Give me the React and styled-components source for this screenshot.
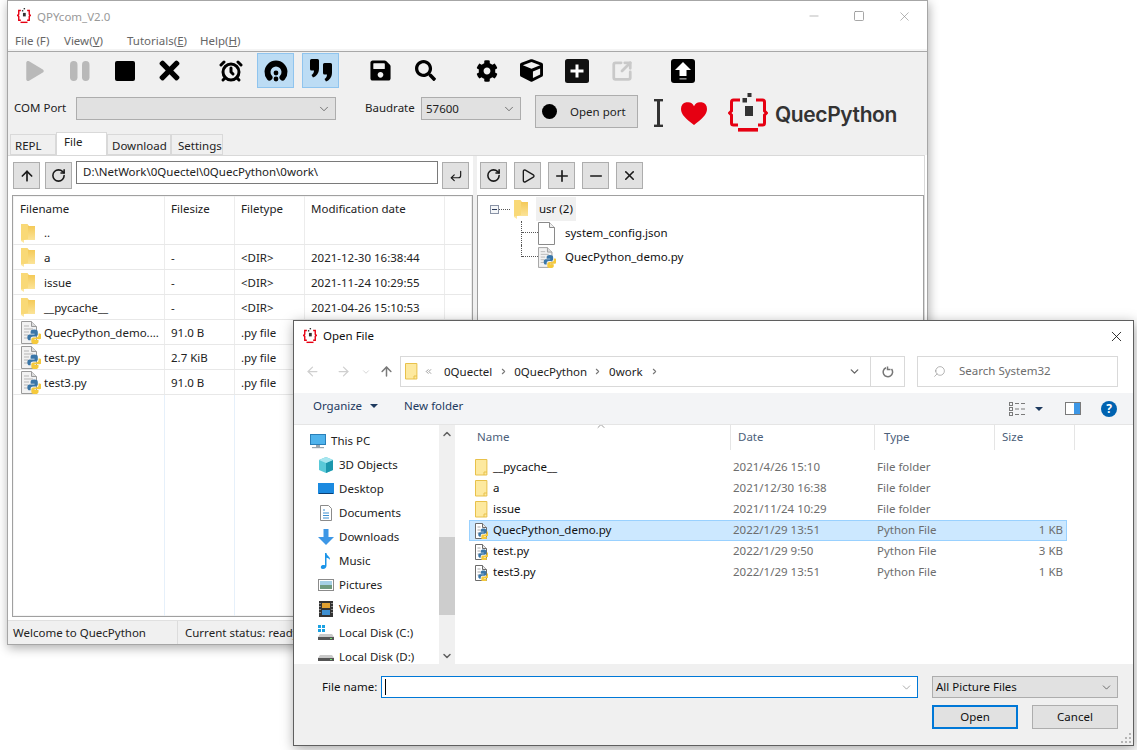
import React from 'react';
import styled, { createGlobalStyle } from 'styled-components';
import { FaPlay, FaTimes, FaSave, FaSearch, FaCog, FaCube } from 'react-icons/fa';
import {
  AlarmClock,
  ArrowLeft,
  ArrowRight,
  ArrowUp,
  ChevronDown,
  ChevronRight,
  ChevronUp,
  ChevronsLeft,
  CornerDownLeft,
  Minus,
  Play,
  Plus,
  RotateCw,
  Search,
  SquareArrowOutUpRight,
  Square,
  X,
} from 'lucide-react';

const GlobalStyle = createGlobalStyle`
  html, body { margin: 0; padding: 0; background: #fff; }
  * { box-sizing: border-box; }
  body { font-family: "Noto Sans", "Open Sans", sans-serif; font-size: 11.5px; color: #111; }
`;

const Desktop = styled.div`
  position: relative;
  width: 1137px;
  height: 750px;
  overflow: hidden;
  background: #fff;
`;

const Spacer = styled.span`
  width: ${(p) => p.$w}px;
  flex: none;
`;

// text sits a pixel above the icon centre line in the native controls
const RowText = styled.span`
  margin-bottom: 2px;
`;

/* ---------- main window ---------- */

const MainWindow = styled.div`
  position: absolute;
  left: 7px;
  top: 0;
  width: 921px;
  height: 645px;
  display: flex;
  flex-direction: column;
  background: #fff;
  border: 1px solid #a6a6a6;
  box-shadow: 1px 3px 10px rgba(0, 0, 0, 0.32);
`;

const TitleBar = styled.div`
  height: 30px;
  flex: none;
  display: flex;
  align-items: center;
  padding-left: 9px;
  gap: 6px;
  color: #999;
`;

const WindowControls = styled.div`
  margin-left: auto;
  display: flex;
  align-items: center;
  gap: 32px;
  padding-right: 15px;
  color: #8a8a8a;
`;

const MenuBar = styled.div`
  height: 21px;
  flex: none;
  display: flex;
  align-items: flex-start;
  border-bottom: 1px solid #a8a8a8;
  box-shadow: inset 0 -2px 0 #f4f4f4;
  color: #666;
  line-height: 19px;
`;

const MenuItem = styled.span`
  margin-left: ${(p) => p.$left}px;
  width: ${(p) => p.$w}px;
  white-space: nowrap;
`;

const TopArea = styled.div`
  height: 80px;
  flex: none;
  background: #f0f0f0;
  display: flex;
  flex-direction: column;
`;

const Toolbar = styled.div`
  display: flex;
  padding: 1px 0 0 8px;
  gap: 8px;
  height: 36px;
  flex: none;
`;

const ToolButton = styled.div`
  width: 37px;
  height: 35px;
  margin-left: ${(p) => p.$gap || 0}px;
  display: flex;
  align-items: center;
  justify-content: center;
  color: ${(p) => (p.$muted ? '#b9b9b9' : '#000')};
  background: ${(p) => (p.$on ? '#bcdcf4' : 'transparent')};
  border: 1px solid ${(p) => (p.$on ? '#8fc4ee' : 'transparent')};
`;

const ComRow = styled.div`
  display: flex;
  align-items: flex-start;
  padding-left: 6px;
  margin-top: 7px;
  height: 33px;
`;

const FieldLabel = styled.div`
  width: ${(p) => p.$w}px;
  margin-left: ${(p) => p.$left || 0}px;
  margin-top: 2px;
  line-height: 22px;
  color: #222;
`;

const ComboBox = styled.div`
  width: ${(p) => p.$w}px;
  height: 23px;
  margin-top: 2px;
  display: flex;
  align-items: center;
  justify-content: space-between;
  padding: 0 4px 0 4px;
  background: #e1e1e1;
  border: 1px solid #adadad;
  color: #222;
`;

const OpenPortButton = styled.div`
  width: 103px;
  height: 33px;
  margin-left: 14px;
  display: flex;
  align-items: center;
  padding-left: 6px;
  gap: 13px;
  background: #e1e1e1;
  border: 1px solid #adadad;
  color: #222;
`;

const Led = styled.span`
  width: 15px;
  height: 15px;
  border-radius: 50%;
  background: #000;
`;

const BrandArea = styled.div`
  display: flex;
  align-items: center;
  height: 40px;
  margin-top: -2px;
  margin-left: 16px;
`;

const BrandName = styled.span`
  margin-left: 7px;
  padding-top: 2px;
  font-family: Inter, "Noto Sans", sans-serif;
  font-weight: 600;
  font-size: 21px;
  letter-spacing: -0.4px;
  color: #333;
`;

const TabStrip = styled.div`
  height: 23px;
  flex: none;
  display: flex;
  align-items: flex-end;
  padding-left: 2px;
  background: #f0f0f0;
`;

const Tab = styled.div`
  width: ${(p) => p.$w}px;
  height: ${(p) => (p.$active ? 23 : 21)}px;
  padding-left: ${(p) => p.$pad}px;
  line-height: ${(p) => (p.$active ? 18 : 21)}px;
  background: ${(p) => (p.$active ? '#fff' : '#f0f0f0')};
  border: 1px solid #d9d9d9;
  border-bottom: ${(p) => (p.$active ? 'none' : '1px solid #d9d9d9')};
  color: #222;
  white-space: nowrap;
`;

const Panel = styled.div`
  flex: 1;
  min-height: 0;
  display: flex;
  background: #fff;
  border-top: 1px solid #d9d9d9;
  border-right: 1px solid #d9d9d9;
  margin-right: 2px;
  padding-left: 4px;
`;

const Pane = styled.div`
  width: ${(p) => p.$w}px;
  flex: none;
  display: flex;
  flex-direction: column;
`;

const Splitter = styled.div`
  width: 4px;
  flex: none;
  background: #f0f0f0;
`;

const PaneBar = styled.div`
  height: 39px;
  flex: none;
  display: flex;
  align-items: flex-start;
  padding: 6px 0 0 ${(p) => p.$pad}px;
  gap: ${(p) => p.$gap}px;
`;

const SquareButton = styled.div`
  width: 27px;
  height: 27px;
  flex: none;
  display: flex;
  align-items: center;
  justify-content: center;
  background: #e1e1e1;
  border: 1px solid #adadad;
  color: #1a1a1a;
`;

const PathInput = styled.div`
  width: 362px;
  height: 23px;
  margin: -1px -1px 0 -1px;
  padding-left: 6px;
  line-height: 20px;
  background: #fff;
  border: 1px solid #7a7a7a;
  color: #222;
`;

const TableBox = styled.div`
  flex: 1;
  min-height: 0;
  display: flex;
  flex-direction: column;
  border: 1px solid #a0a0a0;
  box-shadow: inset 0 0 0 1px #f4f4f4;
`;

const FileRow = styled.div`
  display: grid;
  grid-template-columns: 152px 70px 70px 140px 1fr;
  height: ${(p) => p.$h || 25}px;
  flex: ${(p) => (p.$fill ? 1 : 'none')};
  border-bottom: ${(p) => (p.$plain ? 'none' : '1px solid #e8e8e8')};
`;

const FileCell = styled.div`
  display: flex;
  align-items: center;
  gap: ${(p) => p.$iconGap || 0}px;
  padding-left: ${(p) => p.$pad || 6}px;
  border-right: 1px solid ${(p) => (p.$pale ? '#e6f0fa' : '#ececec')};
  color: #222;
  white-space: nowrap;
  overflow: hidden;
`;

const StatusBar = styled.div`
  height: 24px;
  flex: none;
  margin-top: 3px;
  display: flex;
  align-items: center;
  background: #f0f0f0;
  border-top: 1px solid #e0e0e0;
  color: #222;
`;

const StatusCell = styled.div`
  width: ${(p) => p.$w}px;
  height: 100%;
  line-height: 24px;
  padding-left: ${(p) => p.$pad}px;
  border-right: 1px solid #dcdcdc;
  white-space: nowrap;
`;

const TreeBox = styled.div`
  flex: 1;
  border: 1px solid #a0a0a0;
  padding: 1px 0 0 12px;
`;

const TreeRoot = styled.div`
  display: flex;
  align-items: center;
  height: 24px;
`;

const Expander = styled.span`
  width: 9px;
  height: 9px;
  display: flex;
  align-items: center;
  justify-content: center;
  border: 1px solid #8a93a6;
  background: #f4f6f8;
  &::after {
    content: '';
    width: 5px;
    height: 1px;
    background: #2b3a5a;
  }
`;

const HDots = styled.span`
  width: ${(p) => p.$w}px;
  border-top: 1px dotted #555;
`;

const RootLabel = styled.span`
  margin-left: 8px;
  padding: 0 3px;
  line-height: 24px;
  background: #f0f0f0;
  color: #111;
`;

const TreeChild = styled.div`
  display: flex;
  align-items: center;
  height: 24px;
  margin-left: 31px;
  color: #111;
`;

const TreeIcon = styled.span`
  width: 18px;
  margin-right: 9px;
  flex: none;
  display: flex;
`;

const Connector = styled.span`
  position: relative;
  align-self: flex-start;
  width: 17px;
  height: ${(p) => (p.$last ? 12 : 24)}px;
  border-left: 1px dotted #555;
  &::after {
    content: '';
    position: absolute;
    left: 0;
    top: 11px;
    width: 16px;
    border-top: 1px dotted #555;
  }
`;

/* ---------- open file dialog ---------- */

const Dialog = styled.div`
  position: absolute;
  left: 293px;
  top: 320px;
  width: 841px;
  height: 426px;
  display: flex;
  flex-direction: column;
  background: #fff;
  border: 1px solid #5f5f5f;
  box-shadow: 1px 3px 12px rgba(0, 0, 0, 0.35);
`;

const DialogTitle = styled.div`
  height: 30px;
  flex: none;
  display: flex;
  align-items: center;
  padding: 0 8px 0 9px;
  gap: 6px;
  color: #111;
`;

const CloseGlyph = styled.span`
  margin-left: auto;
  display: flex;
  color: #111;
`;

const NavRow = styled.div`
  height: 42px;
  flex: none;
  display: flex;
  align-items: flex-start;
  padding: 5px 0 0 3px;
`;

const NavSlot = styled.div`
  width: ${(p) => p.$w}px;
  height: 31px;
  display: flex;
  align-items: center;
  justify-content: center;
  color: ${(p) => (p.$dark ? '#7a7a7a' : '#cfcfcf')};
`;

const AddressBar = styled.div`
  width: 505px;
  height: 31px;
  display: flex;
  align-items: center;
  border: 1px solid #d9d9d9;
  padding-left: 4px;
  color: #222;
`;

const Crumb = styled.span`
  margin-left: ${(p) => p.$left}px;
  flex: none;
  display: flex;
  align-items: center;
  color: ${(p) => p.$color || '#222'};
`;

const AddressDrop = styled.span`
  margin-left: auto;
  margin-right: 9px;
  display: flex;
  color: #666;
`;

const AddressEnd = styled.div`
  width: 34px;
  height: 100%;
  display: flex;
  align-items: center;
  justify-content: center;
  border-left: 1px solid #d9d9d9;
  color: #777;
`;

const SearchBox = styled.div`
  width: 201px;
  height: 31px;
  margin-left: 12px;
  display: flex;
  align-items: center;
  padding-left: 15px;
  gap: 13px;
  border: 1px solid #d9d9d9;
  color: #6d6d6d;
`;

const MirrorGlyph = styled.span`
  display: flex;
  transform: scaleX(-1);
`;

const CommandBar = styled.div`
  height: 32px;
  flex: none;
  display: flex;
  align-items: center;
  background: #f3f4f6;
  border-bottom: 1px solid #e5e5e5;
  padding: 0 16px 0 19px;
  color: #1e3a5f;
`;

const Caret = styled.span`
  margin-left: ${(p) => p.$left}px;
  margin-bottom: ${(p) => (p.$lift ? 6 : 0)}px;
  flex: none;
  width: 0;
  height: 0;
  border-left: 4px solid transparent;
  border-right: 4px solid transparent;
  border-top: 4px solid #1e3a5f;
`;

const CommandItem = styled.span`
  margin-left: ${(p) => (p.$auto ? 'auto' : `${p.$left || 0}px`)};
  margin-bottom: ${(p) => (p.$lift ? 6 : 0)}px;
  display: flex;
  align-items: center;
  white-space: nowrap;
`;

const HelpBadge = styled.span`
  width: 16px;
  height: 16px;
  margin-left: 20px;
  border-radius: 50%;
  background: #0063b1;
  color: #fff;
  font-weight: 700;
  font-size: 12px;
  line-height: 16px;
  text-align: center;
`;

const DialogBody = styled.div`
  height: 239px;
  flex: none;
  display: flex;
  overflow: hidden;
`;

const NavList = styled.div`
  width: 145px;
  flex: none;
  padding-top: 4px;
  overflow: hidden;
`;

const NavItem = styled.div`
  height: 24px;
  flex: none;
  display: flex;
  align-items: center;
  gap: 5px;
  padding-left: ${(p) => (p.$top ? 16 : 24)}px;
  color: #222;
  white-space: nowrap;
`;

const ScrollBar = styled.div`
  width: 16px;
  flex: none;
  display: flex;
  flex-direction: column;
  background: #f0f0f0;
  color: #555;
`;

const ScrollEnd = styled.div`
  height: 17px;
  flex: none;
  display: flex;
  align-items: center;
  justify-content: center;
  color: #606060;
`;

const ScrollTrack = styled.div`
  flex: 1;
  padding-top: 95px;
`;

const ScrollThumb = styled.div`
  height: 78px;
  background: #cdcdcd;
`;

const FilePane = styled.div`
  flex: 1;
  min-width: 0;
  margin-left: 2px;
`;

const HeaderRow = styled.div`
  display: grid;
  grid-template-columns: 274px 144px 120px 80px;
  height: 25px;
  margin-bottom: 7px;
`;

const HeaderCell = styled.div`
  position: relative;
  padding-left: ${(p) => p.$pad}px;
  line-height: 24px;
  color: #4c607a;
  border-right: 1px solid #e5e5e5;
`;

const SortMark = styled.span`
  position: absolute;
  left: 138px;
  top: -5px;
  display: flex;
  color: #777;
`;

const ListRow = styled.div`
  display: grid;
  grid-template-columns: 263px 144px 120px 69px;
  align-items: center;
  width: 598px;
  height: 21px;
  margin-left: 12px;
  background: ${(p) => (p.$selected ? '#cce8ff' : 'transparent')};
  border: 1px solid ${(p) => (p.$selected ? '#99d1ff' : 'transparent')};
  color: #6d6d6d;
  white-space: nowrap;
`;

const ListName = styled.div`
  display: flex;
  align-items: center;
  gap: 5px;
  padding-left: 5px;
  color: #111;
`;

const ListCell = styled.div`
  margin-bottom: 2px;
  text-align: ${(p) => (p.$right ? 'right' : 'left')};
  padding-right: ${(p) => (p.$right ? 3 : 0)}px;
`;

const DialogFooter = styled.div`
  position: relative;
  flex: 1;
  background: #f0f0f0;
  padding: 12px 15px 0 28px;
`;

const FooterRow = styled.div`
  display: flex;
  justify-content: ${(p) => (p.$end ? 'flex-end' : 'flex-start')};
  gap: 14px;
  margin-top: ${(p) => p.$top || 0}px;
`;

const FileNameLabel = styled.label`
  width: 59px;
  margin-right: -14px;
  line-height: 22px;
  color: #111;
  white-space: nowrap;
`;

const FileNameInput = styled.div`
  width: 537px;
  height: 22px;
  display: flex;
  align-items: center;
  justify-content: space-between;
  padding: 0 4px 0 3px;
  background: #fff;
  border: 1px solid #0078d7;
  color: #666;
`;

const Caretline = styled.span`
  width: 1px;
  height: 16px;
  background: #000;
`;

const FilterSelect = styled.div`
  width: 186px;
  height: 22px;
  display: flex;
  align-items: center;
  justify-content: space-between;
  padding: 0 4px 0 3px;
  background: #e1e1e1;
  border: 1px solid #adadad;
  color: #111;
`;

const DialogButton = styled.div`
  width: 86px;
  height: 24px;
  line-height: ${(p) => (p.$primary ? 20 : 22)}px;
  text-align: center;
  background: #e1e1e1;
  border: ${(p) => (p.$primary ? '2px solid #0078d7' : '1px solid #adadad')};
  color: #111;
`;

const Grip = styled.svg`
  position: absolute;
  right: 1px;
  bottom: 1px;
`;

/* ---------- drawings ---------- */

const QuecMark = ({ size = 14 }) => (
  <svg width={size} height={size * 1.1} viewBox="0 0 40 44">
    <g fill="none" stroke="#e60012" strokeWidth="4">
      <path d="M11 7H5v11l-3 3 3 3v11h6" />
      <path d="M29 7h6v11l3 3-3 3v11h-6" />
    </g>
    <rect x="10" y="39" width="20" height="4" fill="#e60012" />
    <rect x="17" y="14" width="8" height="10" fill="#333" />
    <rect x="14" y="6" width="4" height="4" fill="#333" />
    <rect x="19" y="0" width="4" height="4" fill="#333" />
  </svg>
);

const BrandLogo = () => (
  <svg width="40" height="40" viewBox="0 0 40 40">
    <g fill="none" stroke="#e60012" strokeWidth="3">
      <path d="M12 7H5.500a2 2 0 0 0-2 2v9l-2 2 2 2v8a2 2 0 0 0 2 2H10" />
      <path d="M28 7h6.500a2 2 0 0 1 2 2v9l2 2-2 2v8a2 2 0 0 1-2 2H30" />
    </g>
    <rect x="10" y="35" width="20" height="3.600" fill="#e60012" />
    <rect x="17" y="13" width="8" height="10" fill="#333" />
    <rect x="14.500" y="5" width="4.500" height="4.500" fill="#333" />
    <rect x="19.500" y="0" width="4" height="4" fill="#333" />
  </svg>
);

const Pause = () => (
  <svg width="20" height="20" viewBox="0 0 20 20" fill="#b9b9b9">
    <rect x="0" y="0" width="7.500" height="20" rx="3.700" />
    <rect x="12" y="0" width="7.500" height="20" rx="3.700" />
  </svg>
);

const Stop = () => (
  <svg width="20" height="20" viewBox="0 0 20 20">
    <rect width="20" height="20" rx="2" fill="#000" />
  </svg>
);

const Headset = () => (
  <svg width="24" height="24" viewBox="0 0 24 24">
    <path d="M5.500 18.500A8.500 8.500 0 1 1 18.500 18.500" fill="none" stroke="#000" strokeWidth="6" strokeLinecap="round" />
    <circle cx="12" cy="14" r="2.400" fill="#000" />
    <circle cx="12" cy="20" r="2.400" fill="#000" />
  </svg>
);

const Quote = () => (
  <svg width="24" height="24" viewBox="0 0 24 24" fill="#000">
    <path d="M1 1.500a1.500 1.500 0 0 1 1.500-1.500h6a1.500 1.500 0 0 1 1.500 1.500v8c0 5-3 8-6 9l-1.500-2.500c1.500-1 2.500-2.500 2.500-4.500h-2.500a1.500 1.500 0 0 1-1.500-1.500z" />
    <path d="M14 5.500a1.500 1.500 0 0 1 1.500-1.500h6a1.500 1.500 0 0 1 1.500 1.500v8c0 5-3 8-6 9l-1.500-2.500c1.500-1 2.500-2.500 2.500-4.500h-2.500a1.500 1.500 0 0 1-1.500-1.500z" />
  </svg>
);

const UploadBox = () => (
  <svg width="24" height="24" viewBox="0 0 24 24">
    <rect width="24" height="24" rx="3" fill="#000" />
    <path d="M12 3l8 8h-4.500v6h-7v-6H4z" fill="#fff" />
    <rect x="8.500" y="19" width="7" height="1.600" fill="#888" />
  </svg>
);

const PlusBox = () => (
  <svg width="24" height="24" viewBox="0 0 24 24">
    <rect width="24" height="24" rx="2.500" fill="#111" />
    <path d="M10.500 5.500h3v5h5v3h-5v5h-3v-5h-5v-3h5z" fill="#fff" />
  </svg>
);

const IBar = () => (
  <svg width="9" height="28" viewBox="0 0 9 28" fill="#333">
    <rect x="0" y="0" width="9" height="2.400" />
    <rect x="0" y="25.600" width="9" height="2.400" />
    <rect x="3" y="0" width="3" height="28" />
  </svg>
);

const Heart = () => (
  <svg width="26" height="23" viewBox="0 0 26 23">
    <path d="M13 23C5 17 0 12.500 0 7a6.800 6.800 0 0 1 13-2.800A6.800 6.800 0 0 1 26 7c0 5.500-5 10-13 16z" fill="#e60012" />
  </svg>
);

const TallFolder = () => (
  <svg width="14" height="20" viewBox="0 0 14 20">
    <defs>
      <linearGradient id="tallFolder" x1="0" y1="0" x2="0" y2="1">
        <stop offset="0" stopColor="#f3c64f" />
        <stop offset="1" stopColor="#fde9a6" />
      </linearGradient>
    </defs>
    <path d="M0 1h6l2 2v0h6v14H3v3l-3-2z" fill="url(#tallFolder)" />
    <path d="M0 1h6l1 1v14l-4 1H0z" fill="#f9d977" />
  </svg>
);

const PYTHON_HALF =
  'M6 .5C4 .5 3 1.200 3 2.500V4h3.300v.6H2C.9 4.600.3 5.500.3 7c0 1.500.7 2.400 1.700 2.400h1V8c0-1.100.9-1.800 2-1.800h2.300C8.200 6.200 9 5.500 9 4.600V2.500C9 1.200 8 .5 6 .5z';

const PythonMark = ({ x, y, s }) => (
  <g transform={`translate(${x} ${y}) scale(${s})`}>
    <path d={PYTHON_HALF} fill="#3a76a8" />
    <path d={PYTHON_HALF} fill="#f5c93c" transform="rotate(180 6 6.200) translate(-.6 -.8)" />
  </g>
);

const PyFile = () => (
  <svg width="20" height="23" viewBox="0 0 20 23">
    <path d="M.5.5h10l5 5v17H.5z" fill="#f2f2f2" stroke="#9a9a9a" />
    <path d="M10.500.5v5h5" fill="#dcdcdc" stroke="#9a9a9a" />
    <g stroke="#b5b5b5">
      <path d="M3 5h5M3 8h9M3 11h5M3 14h4M3 17h4" />
    </g>
    <PythonMark x={6} y={8} s={1.2} />
  </svg>
);

const PyFileSmall = () => (
  <svg width="13" height="16" viewBox="0 0 13 16">
    <path d="M.5.5h7l4 4v11H.5z" fill="#fff" stroke="#6b6b6b" />
    <path d="M7.500.5v4h4" fill="#e8e8e8" stroke="#6b6b6b" />
    <path d="M2.500 4h3M2.500 7h3M2.500 10h2" stroke="#a8a8a8" />
    <PythonMark x={3} y={5} s={0.92} />
  </svg>
);

const BlankFile = () => (
  <svg width="18" height="23" viewBox="0 0 18 23">
    <path d="M.5.5h11l5 5v17H.5z" fill="#fff" stroke="#8a8a8a" />
    <path d="M11.500.5v5h5" fill="#f0f0f0" stroke="#8a8a8a" />
  </svg>
);

const PaleFolder = () => (
  <svg width="13" height="17" viewBox="0 0 13 17">
    <path d="M.5.5h11.400v15.500H.5z" fill="#fde99f" stroke="#e8c14a" />
    <path d="M9 16v-3h3" fill="none" stroke="#e8c14a" />
  </svg>
);

const NavGlyph = ({ kind }) => {
  switch (kind) {
    case 'pc':
      return (
        <svg width="16" height="16" viewBox="0 0 16 16">
          <rect x=".5" y="1.500" width="15" height="10" fill="#4fb3ec" stroke="#2a7fb8" />
          <rect x="6" y="12" width="4" height="2" fill="#9aa5ad" />
          <rect x="2" y="14" width="12" height="1.200" fill="#9aa5ad" />
        </svg>
      );
    case 'cube':
      return (
        <svg width="16" height="16" viewBox="0 0 16 16">
          <path d="M8 0l7 3v10l-7 3-7-3V3z" fill="#59c9d8" />
          <path d="M8 6l7-3v10l-7 3z" fill="#1c97ad" />
          <path d="M8 0l7 3-7 3-7-3z" fill="#a7e6ef" />
        </svg>
      );
    case 'desktop':
      return (
        <svg width="16" height="16" viewBox="0 0 16 16">
          <rect x="0" y="2" width="16" height="11" fill="#1b8ae0" />
          <rect x="1" y="12" width="14" height="1" fill="#0b3f74" />
        </svg>
      );
    case 'docs':
      return (
        <svg width="16" height="16" viewBox="0 0 16 16">
          <path d="M2.500.5h8l3 3v12h-11z" fill="#fff" stroke="#8b8b8b" />
          <path d="M5 5h2M5 8h6M5 10.500h6M5 13h6" stroke="#3d8fd1" />
        </svg>
      );
    case 'down':
      return (
        <svg width="16" height="16" viewBox="0 0 16 16">
          <path d="M5.500 0h5v8H16l-8 8-8-8h5.500z" fill="#3d97e6" />
        </svg>
      );
    case 'music':
      return (
        <svg width="16" height="16" viewBox="0 0 16 16">
          <path d="M7 0h1.500c0 3 4 3.500 3.500 7-.8-1.500-2-2-3.500-2.300V12.500C8.500 14.500 7 16 5 16s-2.500-1.500-2-2.800C3.600 12 5.500 11.500 7 12.200z" fill="#1b94e8" />
        </svg>
      );
    case 'pics':
      return (
        <svg width="16" height="16" viewBox="0 0 16 16">
          <rect x=".5" y="2.500" width="15" height="11" fill="#fff" stroke="#8b8b8b" />
          <rect x="2" y="4" width="12" height="4" fill="#a5d0e6" />
          <rect x="2" y="8" width="12" height="4" fill="#6f9a7f" />
        </svg>
      );
    case 'video':
      return (
        <svg width="16" height="16" viewBox="0 0 16 16">
          <rect x="1" y="0" width="14" height="16" fill="#333" />
          <rect x="4" y="2" width="8" height="5" fill="#e0a030" />
          <rect x="4" y="9" width="8" height="5" fill="#3d8fd1" />
          <path d="M2 2v1M2 5v1M2 8v1M2 11v1M14 2v1M14 5v1M14 8v1M14 11v1" stroke="#ddd" />
        </svg>
      );
    case 'diskC':
      return (
        <svg width="16" height="16" viewBox="0 0 16 16">
          <rect x="0" y="0" width="3" height="3" fill="#1ba1e2" />
          <rect x="4" y="0" width="3" height="3" fill="#1ba1e2" />
          <rect x="0" y="4" width="3" height="3" fill="#1ba1e2" />
          <rect x="4" y="4" width="3" height="3" fill="#1ba1e2" />
          <path d="M2 9h12l2 3v3H0v-3z" fill="#c9c9c9" />
          <rect x="0" y="12" width="16" height="3" fill="#555" />
          <rect x="12" y="13" width="2" height="1" fill="#6fe06f" />
        </svg>
      );
    default:
      return (
        <svg width="16" height="16" viewBox="0 0 16 16">
          <path d="M2 6h12l2 3v3H0V9z" fill="#c9c9c9" />
          <rect x="0" y="9" width="16" height="3" fill="#555" />
          <rect x="12" y="10" width="2" height="1" fill="#6fe06f" />
        </svg>
      );
  }
};

const ViewGlyph = () => (
  <svg width="17" height="14" viewBox="0 0 17 14" fill="none" stroke="#7a7a7a">
    <rect x=".5" y=".5" width="3" height="3" />
    <rect x=".5" y="5.500" width="3" height="3" />
    <rect x=".5" y="10.500" width="3" height="3" />
    <path d="M6 1.500h4M12 1.500h4M6 7h4M12 7h4M6 12.500h4M12 12.500h4" />
  </svg>
);

const PaneGlyph = () => (
  <svg width="16" height="13" viewBox="0 0 16 13">
    <rect x=".5" y=".5" width="15" height="12" fill="#fff" stroke="#7a7a7a" />
    <rect x="9" y="1" width="6" height="11" fill="#3d97e6" />
  </svg>
);

const RefreshGlyph = () => (
  <svg width="12" height="12" viewBox="0 0 12 12" fill="none" stroke="#777" strokeWidth="1.500">
    <path d="M9.500 3A4.700 4.700 0 1 1 4 1.700" />
    <path d="M5.500 .5v3h3" />
  </svg>
);

const GripDots = () => (
  <Grip width="12" height="12" viewBox="0 0 12 12" fill="#b5b5b5">
    <rect x="9" y="1" width="2" height="2" />
    <rect x="5" y="5" width="2" height="2" />
    <rect x="9" y="5" width="2" height="2" />
    <rect x="1" y="9" width="2" height="2" />
    <rect x="5" y="9" width="2" height="2" />
    <rect x="9" y="9" width="2" height="2" />
  </Grip>
);

/* ---------- data ---------- */

const localFiles = [
  { name: '..', folder: true, size: '', type: '', date: '', h: 24 },
  { name: 'a', folder: true, size: '-', type: '<DIR>', date: '2021-12-30 16:38:44' },
  { name: 'issue', folder: true, size: '-', type: '<DIR>', date: '2021-11-24 10:29:55' },
  { name: '__pycache__', folder: true, size: '-', type: '<DIR>', date: '2021-04-26 15:10:53' },
  { name: 'QuecPython_demo....', size: '91.0 B', type: '.py file', date: '' },
  { name: 'test.py', size: '2.7 KiB', type: '.py file', date: '' },
  { name: 'test3.py', size: '91.0 B', type: '.py file', date: '' },
];

const navItems = [
  { kind: 'pc', label: 'This PC', top: true },
  { kind: 'cube', label: '3D Objects' },
  { kind: 'desktop', label: 'Desktop' },
  { kind: 'docs', label: 'Documents' },
  { kind: 'down', label: 'Downloads' },
  { kind: 'music', label: 'Music' },
  { kind: 'pics', label: 'Pictures' },
  { kind: 'video', label: 'Videos' },
  { kind: 'diskC', label: 'Local Disk (C:)' },
  { kind: 'diskD', label: 'Local Disk (D:)' },
];

const dialogFiles = [
  { name: '__pycache__', folder: true, date: '2021/4/26 15:10', type: 'File folder', size: '' },
  { name: 'a', folder: true, date: '2021/12/30 16:38', type: 'File folder', size: '' },
  { name: 'issue', folder: true, date: '2021/11/24 10:29', type: 'File folder', size: '' },
  { name: 'QuecPython_demo.py', date: '2022/1/29 13:51', type: 'Python File', size: '1 KB', selected: true },
  { name: 'test.py', date: '2022/1/29 9:50', type: 'Python File', size: '3 KB' },
  { name: 'test3.py', date: '2022/1/29 13:51', type: 'Python File', size: '1 KB' },
];

const MainApp = () => (
  <MainWindow>
    <TitleBar>
      <QuecMark />
      QPYcom_V2.0
      <WindowControls>
        <Minus size={14} strokeWidth={1} />
        <Square size={12} strokeWidth={1.500} />
        <X size={15} strokeWidth={1} />
      </WindowControls>
    </TitleBar>
    <MenuBar>
      <MenuItem $left={7} $w={49}>File (F)</MenuItem>
      <MenuItem $left={0} $w={63}>View(<u>V</u>)</MenuItem>
      <MenuItem $left={0} $w={73}>Tutorials(<u>E</u>)</MenuItem>
      <MenuItem $left={0} $w={60}>Help(<u>H</u>)</MenuItem>
    </MenuBar>
    <TopArea>
      <Toolbar>
        <ToolButton $muted><FaPlay size={20} /></ToolButton>
        <ToolButton $muted><Pause /></ToolButton>
        <ToolButton><Stop /></ToolButton>
        <ToolButton><FaTimes size={29} /></ToolButton>
        <ToolButton $gap={16}><AlarmClock size={24} strokeWidth={3} /></ToolButton>
        <ToolButton $on><Headset /></ToolButton>
        <ToolButton $on><Quote /></ToolButton>
        <ToolButton $gap={15}><FaSave size={23} /></ToolButton>
        <ToolButton><FaSearch size={21} /></ToolButton>
        <ToolButton $gap={16}><FaCog size={22} /></ToolButton>
        <ToolButton><FaCube size={23} /></ToolButton>
        <ToolButton><PlusBox /></ToolButton>
        <ToolButton $muted><SquareArrowOutUpRight size={22} strokeWidth={3} color="#c9c9c9" /></ToolButton>
        <ToolButton $gap={16}><UploadBox /></ToolButton>
      </Toolbar>
      <ComRow>
        <FieldLabel $w={62}>COM Port</FieldLabel>
        <ComboBox $w={260}>
          <span />
          <ChevronDown size={14} strokeWidth={1} />
        </ComboBox>
        <FieldLabel $w={56} $left={29}>Baudrate</FieldLabel>
        <ComboBox $w={100}>
          57600
          <ChevronDown size={14} strokeWidth={1} />
        </ComboBox>
        <OpenPortButton>
          <Led />
          Open port
        </OpenPortButton>
        <BrandArea>
          <IBar />
          <Spacer $w={18} />
          <Heart />
          <Spacer $w={21} />
          <BrandLogo />
          <BrandName>QuecPython</BrandName>
        </BrandArea>
      </ComRow>
    </TopArea>
    <TabStrip>
      <Tab $w={46} $pad={4}>REPL</Tab>
      <Tab $w={51} $pad={7} $active>File</Tab>
      <Tab $w={64} $pad={4}>Download</Tab>
      <Tab $w={52} $pad={6}>Settings</Tab>
    </TabStrip>
    <Panel>
      <Pane $w={461}>
        <PaneBar $pad={1} $gap={5}>
          <SquareButton><ArrowUp size={16} strokeWidth={2.500} /></SquareButton>
          <SquareButton><RotateCw size={15} strokeWidth={2.500} /></SquareButton>
          <PathInput>D:\NetWork\0Quectel\0QuecPython\0work\</PathInput>
          <SquareButton><CornerDownLeft size={14} strokeWidth={2} /></SquareButton>
        </PaneBar>
        <TableBox>
          <FileRow $plain>
            <FileCell $pad={7}>Filename</FileCell>
            <FileCell>Filesize</FileCell>
            <FileCell>Filetype</FileCell>
            <FileCell>Modification date</FileCell>
            <FileCell />
          </FileRow>
          {localFiles.map((f) => (
            <FileRow key={f.name} $h={f.h}>
              <FileCell $pad={8} $iconGap={f.folder ? 9 : 3}>
                {f.folder ? <TallFolder /> : <PyFile />}
                {f.name}
              </FileCell>
              <FileCell>{f.size}</FileCell>
              <FileCell>{f.type}</FileCell>
              <FileCell>{f.date}</FileCell>
              <FileCell />
            </FileRow>
          ))}
          <FileRow $fill $plain>
            <FileCell $pale />
            <FileCell $pale />
            <FileCell $pale />
            <FileCell $pale />
            <FileCell $pale />
          </FileRow>
        </TableBox>
      </Pane>
      <Splitter />
      <Pane $w={447}>
        <PaneBar $pad={3} $gap={7}>
          <SquareButton><RotateCw size={15} strokeWidth={2.500} /></SquareButton>
          <SquareButton><Play size={16} strokeWidth={2} /></SquareButton>
          <SquareButton><Plus size={18} strokeWidth={2.200} /></SquareButton>
          <SquareButton><Minus size={18} strokeWidth={2.200} /></SquareButton>
          <SquareButton><X size={15} strokeWidth={2.500} /></SquareButton>
        </PaneBar>
        <TreeBox>
          <TreeRoot>
            <Expander />
            <HDots $w={11} />
            <Spacer $w={4} />
            <TallFolder />
            <RootLabel>usr (2)</RootLabel>
          </TreeRoot>
          <TreeChild>
            <Connector />
            <TreeIcon><BlankFile /></TreeIcon>
            <RowText>system_config.json</RowText>
          </TreeChild>
          <TreeChild>
            <Connector $last />
            <TreeIcon><PyFile /></TreeIcon>
            <RowText>QuecPython_demo.py</RowText>
          </TreeChild>
        </TreeBox>
      </Pane>
    </Panel>
    <StatusBar>
      <StatusCell $w={170} $pad={5}>Welcome to QuecPython</StatusCell>
      <StatusCell $w={300} $pad={7}>Current status: ready</StatusCell>
    </StatusBar>
  </MainWindow>
);

const OpenDialog = () => (
  <Dialog>
    <DialogTitle>
      <QuecMark />
      <RowText>Open File</RowText>
      <CloseGlyph><X size={17} strokeWidth={1.200} /></CloseGlyph>
    </DialogTitle>
    <NavRow>
      <NavSlot $w={31}><ArrowLeft size={15} strokeWidth={2} /></NavSlot>
      <NavSlot $w={31}><ArrowRight size={15} strokeWidth={2} /></NavSlot>
      <NavSlot $w={14}><ChevronDown size={10} strokeWidth={2} /></NavSlot>
      <NavSlot $w={27} $dark><ArrowUp size={15} strokeWidth={2.400} /></NavSlot>
      <AddressBar>
        <PaleFolder />
        <Crumb $left={6} $color="#777"><ChevronsLeft size={9} strokeWidth={2} /></Crumb>
        <Crumb $left={11}>0Quectel</Crumb>
        <Crumb $left={7} $color="#777"><ChevronRight size={9} strokeWidth={3} /></Crumb>
        <Crumb $left={6}>0QuecPython</Crumb>
        <Crumb $left={6} $color="#777"><ChevronRight size={9} strokeWidth={3} /></Crumb>
        <Crumb $left={7}>0work</Crumb>
        <Crumb $left={7} $color="#777"><ChevronRight size={9} strokeWidth={3} /></Crumb>
        <AddressDrop><ChevronDown size={13} strokeWidth={2.500} /></AddressDrop>
        <AddressEnd><RefreshGlyph /></AddressEnd>
      </AddressBar>
      <SearchBox>
        <MirrorGlyph><Search size={13} strokeWidth={1} color="#777" /></MirrorGlyph>
        <RowText>Search System32</RowText>
      </SearchBox>
    </NavRow>
    <CommandBar>
      <CommandItem $lift>Organize</CommandItem>
      <Caret $left={8} $lift />
      <CommandItem $left={26} $lift>New folder</CommandItem>
      <CommandItem $auto><ViewGlyph /></CommandItem>
      <Caret $left={9} />
      <CommandItem $left={22}><PaneGlyph /></CommandItem>
      <HelpBadge>?</HelpBadge>
    </CommandBar>
    <DialogBody>
      <NavList>
        {navItems.map((n) => (
          <NavItem key={n.kind} $top={n.top}>
            <NavGlyph kind={n.kind} />
            <RowText>{n.label}</RowText>
          </NavItem>
        ))}
      </NavList>
      <ScrollBar>
        <ScrollEnd><ChevronUp size={12} strokeWidth={3} /></ScrollEnd>
        <ScrollTrack><ScrollThumb /></ScrollTrack>
        <ScrollEnd><ChevronDown size={12} strokeWidth={3} /></ScrollEnd>
      </ScrollBar>
      <FilePane>
        <HeaderRow>
          <HeaderCell $pad={20}>
            Name
            <SortMark><ChevronUp size={12} strokeWidth={1.500} /></SortMark>
          </HeaderCell>
          <HeaderCell $pad={7}>Date</HeaderCell>
          <HeaderCell $pad={9}>Type</HeaderCell>
          <HeaderCell $pad={7}>Size</HeaderCell>
        </HeaderRow>
        {dialogFiles.map((f) => (
          <ListRow key={f.name} $selected={f.selected}>
            <ListName>
              {f.folder ? <PaleFolder /> : <PyFileSmall />}
              <RowText>{f.name}</RowText>
            </ListName>
            <ListCell>{f.date}</ListCell>
            <ListCell>{f.type}</ListCell>
            <ListCell $right>{f.size}</ListCell>
          </ListRow>
        ))}
      </FilePane>
    </DialogBody>
    <DialogFooter>
      <FooterRow>
        <FileNameLabel>File name:</FileNameLabel>
        <FileNameInput>
          <Caretline />
          <ChevronDown size={13} strokeWidth={1} />
        </FileNameInput>
        <FilterSelect>
          <RowText>All Picture Files</RowText>
          <ChevronDown size={13} strokeWidth={1} />
        </FilterSelect>
      </FooterRow>
      <FooterRow $end $top={7}>
        <DialogButton $primary>Open</DialogButton>
        <DialogButton>Cancel</DialogButton>
      </FooterRow>
      <GripDots />
    </DialogFooter>
  </Dialog>
);

export default function App() {
  return (
    <Desktop>
      <GlobalStyle />
      <MainApp />
      <OpenDialog />
    </Desktop>
  );
}
